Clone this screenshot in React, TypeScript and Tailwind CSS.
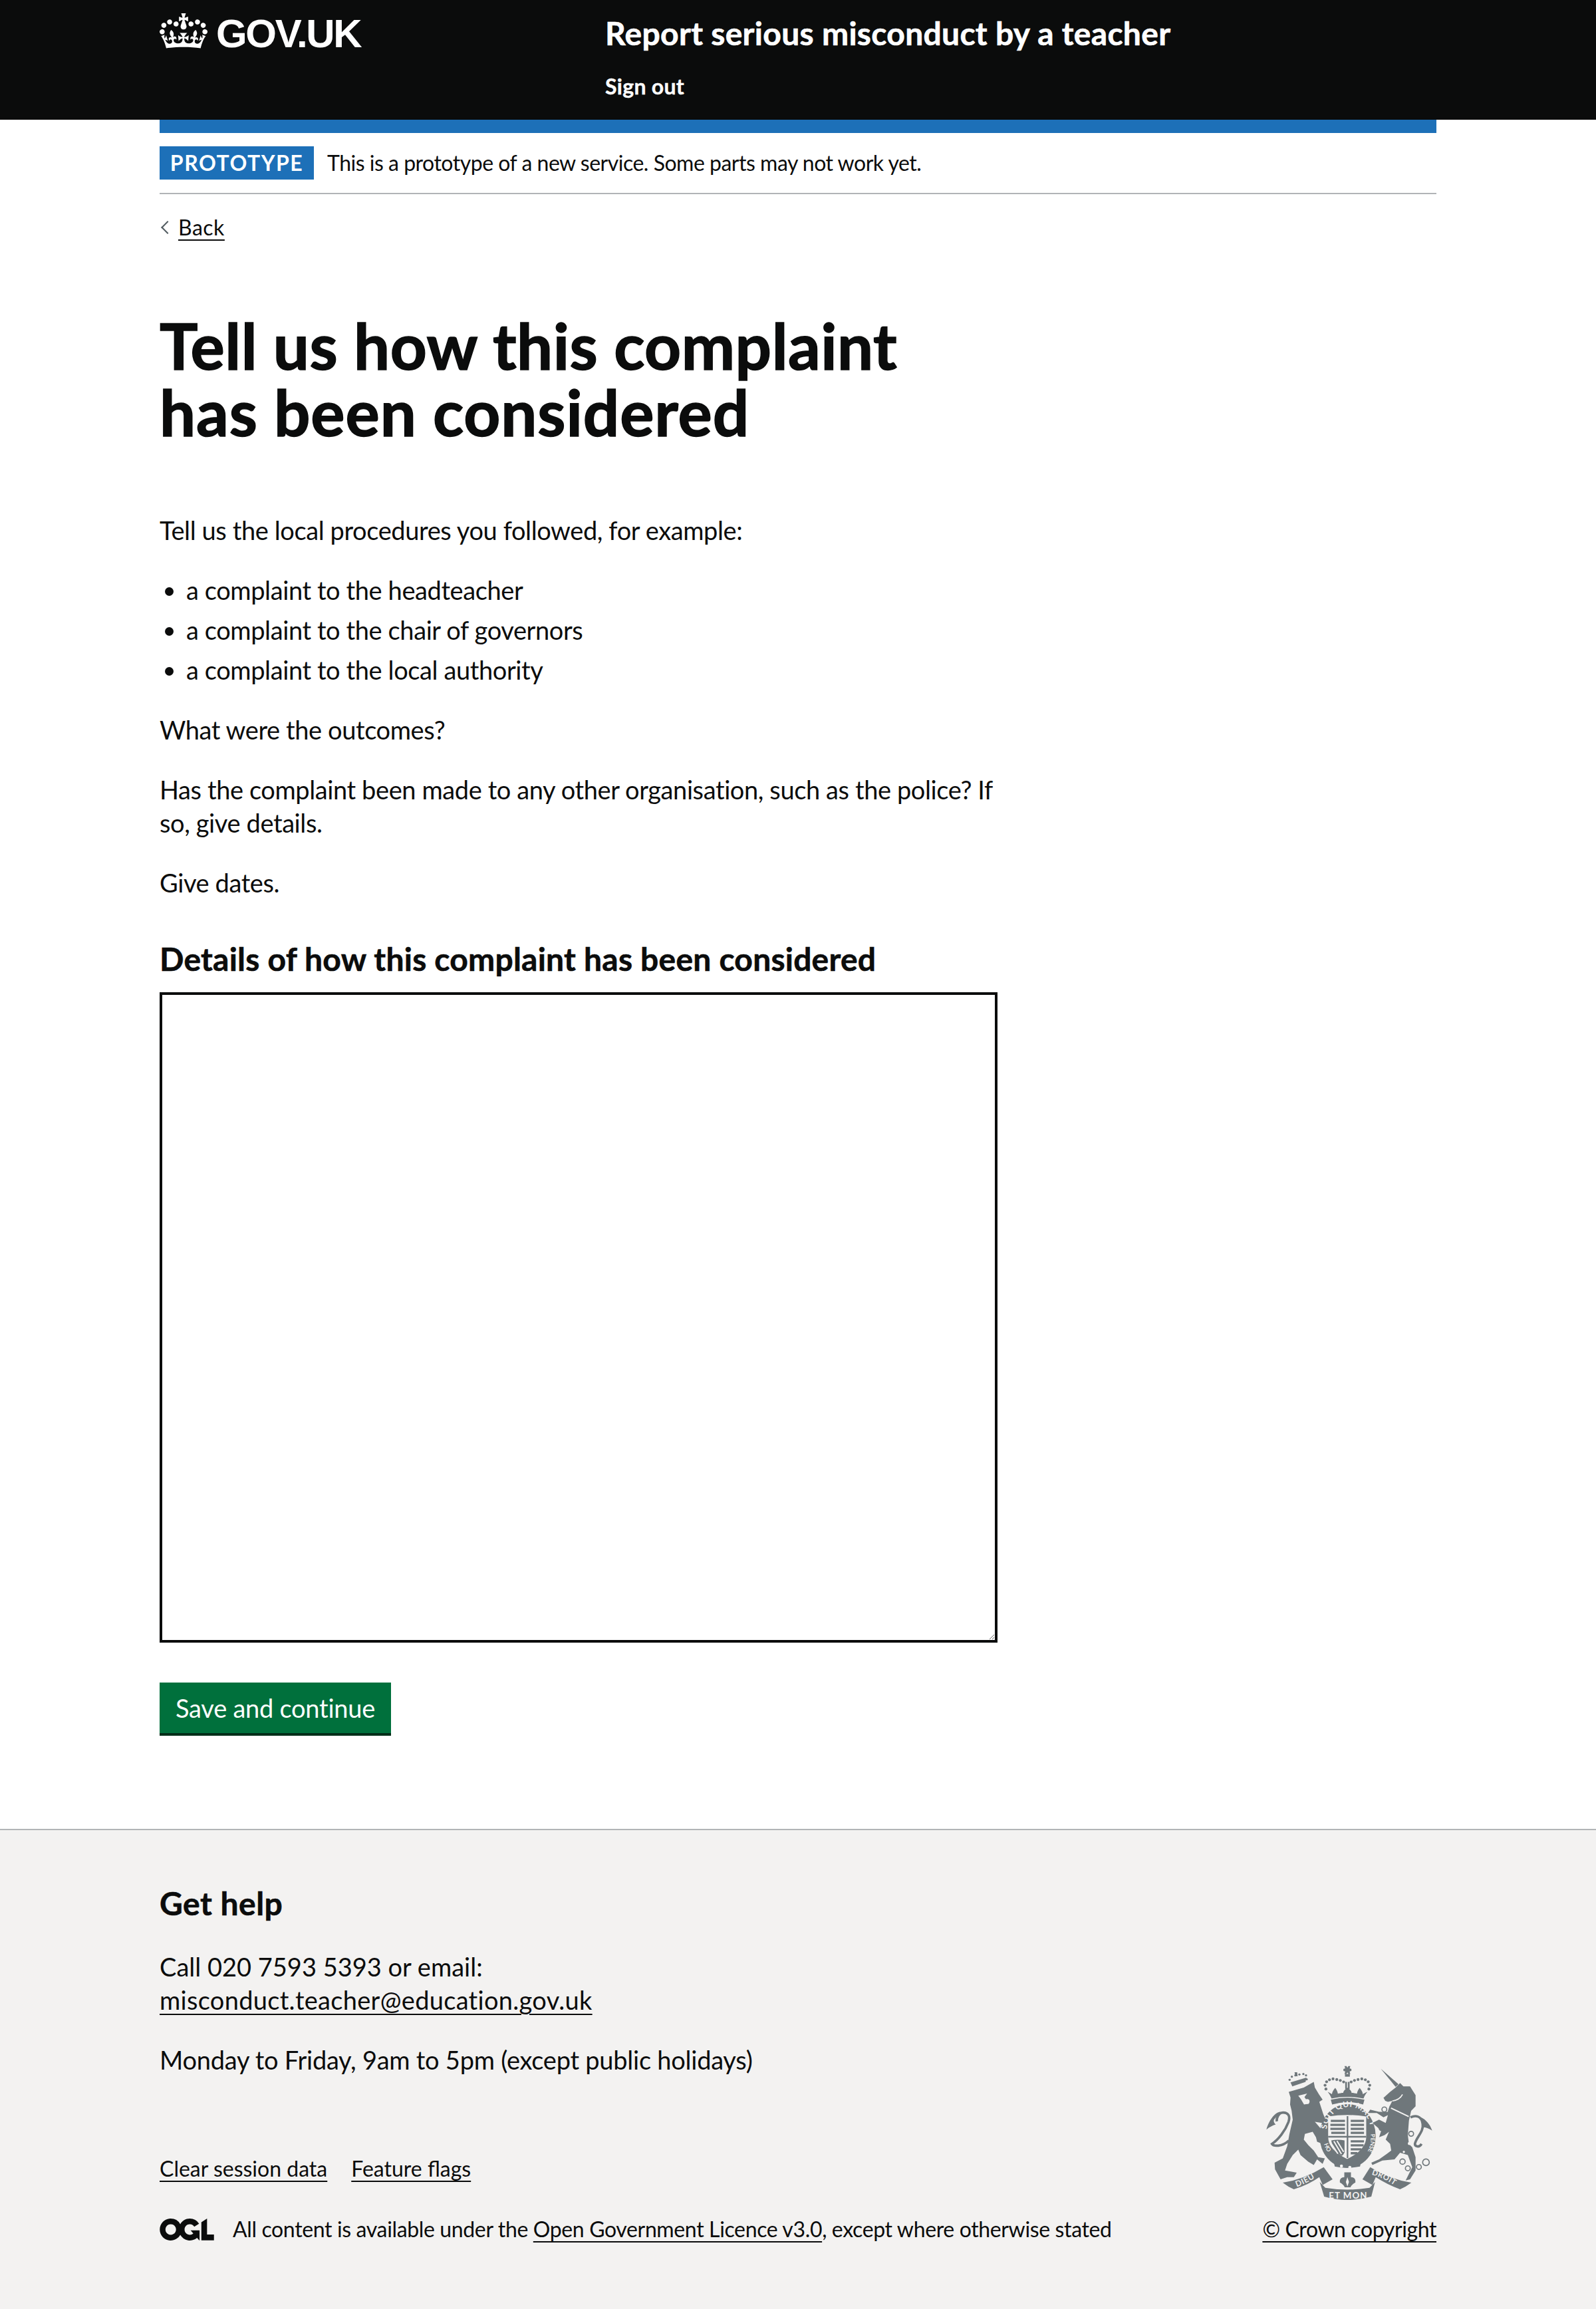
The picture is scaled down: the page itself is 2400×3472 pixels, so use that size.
import React from "react";

const body = "font-['Lato','Noto_Sans',sans-serif] text-[#0b0c0c]";

const Crown = () => (
  <svg viewBox="0 0 132 97" className="w-[72px] h-[53px] fill-white shrink-0">
    <path
      fillRule="evenodd"
      d="M25 30.2c3.5 1.5 7.7-.2 9.1-3.7 1.5-3.6-.2-7.8-3.9-9.2-3.6-1.4-7.6.3-9.1 3.9-1.4 3.5.3 7.5 3.9 9zM9 39.5c3.6 1.5 7.8-.2 9.2-3.7 1.5-3.6-.2-7.8-3.9-9.1-3.6-1.5-7.6.2-9.1 3.8-1.4 3.5.3 7.5 3.8 9zM4.4 57.2c3.5 1.5 7.7-.2 9.1-3.8 1.5-3.6-.2-7.7-3.9-9.1-3.5-1.5-7.6.3-9.1 3.8-1.4 3.5.3 7.6 3.9 9.1zm38.3-21.4c3.5 1.5 7.7-.2 9.1-3.8 1.5-3.6-.2-7.7-3.9-9.1-3.6-1.5-7.6.3-9.1 3.8-1.3 3.6.4 7.7 3.9 9.1zm64.4-5.6c-3.6 1.5-7.8-.2-9.1-3.7-1.5-3.6.2-7.8 3.8-9.2 3.6-1.4 7.7.3 9.2 3.9 1.3 3.5-.4 7.5-3.9 9zm15.9 9.3c-3.6 1.5-7.7-.2-9.1-3.7-1.5-3.6.2-7.8 3.7-9.1 3.6-1.5 7.7.2 9.2 3.8 1.5 3.5-.3 7.5-3.8 9zm4.7 17.7c-3.6 1.5-7.8-.2-9.2-3.8-1.5-3.6.2-7.7 3.9-9.1 3.6-1.5 7.7.3 9.2 3.8 1.3 3.5-.4 7.6-3.9 9.1zM89.3 35.8c-3.6 1.5-7.8-.2-9.2-3.8-1.4-3.6.2-7.7 3.9-9.1 3.6-1.5 7.7.3 9.2 3.8 1.4 3.6-.3 7.7-3.9 9.1zM69.7 17.7l8.9 4.7V9.3l-8.9 2.8c-.2-.3-.5-.6-.9-.9L72.4 0H59.6l3.6 11.2c-.3.3-.6.5-.9.9l-8.8-2.8v13.1l8.8-4.7c.3.3.6.7.9.9l-5 15.4v.1c-.2.8-.4 1.6-.4 2.4 0 4.1 3.1 7.5 7 8.1h.2c.3 0 .7.1 1 .1.4 0 .7 0 1-.1h.2c4-.6 7.1-4.1 7.1-8.1 0-.8-.1-1.7-.4-2.4V34l-5.1-15.4c.4-.2.7-.6 1-.9zM66 92.8c16.9 0 32.8 1.1 47.1 3.2 4-16.9 8.9-26.7 14-33.5l-9.6-3.4c1 4.9 1.1 7.2 0 10.2-1.5-1.4-3-4.3-4.2-8.7L108.6 76c2.8-2 5-3.2 7.5-3.3-4.4 9.4-10 11.9-13.6 11.2-4.3-.8-6.3-4.6-5.6-7.9 1-4.7 5.7-5.9 8-.5 4.3-8.7-3-11.4-7.6-8.8 7.1-7.2 7.9-13.5 2.1-21.1-8 6.1-8.1 12.3-4.5 20.8-4.7-5.4-12.1-2.5-9.5 6.2 3.4-5.2 7.9-2 7.2 3.1-.6 4.3-6.4 7.8-13.5 7.2-10.3-.9-10.9-8-11.2-13.8 2.5-.5 7.1 1.8 11 7.3L80.2 60c-4.1 4.4-8 5.3-12.3 5.4 1.4-4.4 8-11.6 8-11.6H55.5s6.4 7.2 7.9 11.6c-4.2-.1-8-1-12.3-5.4l1.4 16.4c3.9-5.5 8.5-7.7 10.9-7.3-.3 5.8-.9 12.8-11.1 13.8-7.2.6-12.9-2.9-13.5-7.2-.7-5 3.8-8.3 7.1-3.1 2.7-8.7-4.6-11.6-9.4-6.2 3.7-8.5 3.6-14.7-4.6-20.8-5.8 7.6-5 13.9 2.2 21.1-4.7-2.6-11.9.1-7.7 8.8 2.3-5.5 7.1-4.2 8.1.5.7 3.3-1.3 7.1-5.7 7.9-3.5.7-9-1.8-13.5-11.2 2.5.1 4.7 1.3 7.5 3.3l-4.7-15.4c-1.2 4.4-2.7 7.2-4.3 8.7-1.1-3-.9-5.3 0-10.2l-9.5 3.4c5 6.9 9.9 16.7 14 33.5 14.8-2.1 30.8-3.2 47.7-3.2z"
    />
  </svg>
);

const Ogl = () => (
  <svg viewBox="0 0 483.2 195.7" className="w-[82px] h-[33px] fill-[#0b0c0c] shrink-0">
    <path d="M421.5 142.8V.1l-50.7 32.3v161.1h112.4v-50.7zm-122.3-9.6A47.12 47.12 0 0 1 221 97.8c0-26 21.1-47.1 47.1-47.1 16.7 0 31.4 8.7 39.7 21.8l42.7-27.2A97.63 97.63 0 0 0 268.1 0c-36.5 0-68.3 20.1-85.1 49.7A98 98 0 0 0 97.8 0C43.9 0 0 43.9 0 97.8s43.9 97.8 97.8 97.8c36.5 0 68.4-20.1 85.1-49.7a97.76 97.76 0 0 0 149.6 25.4l19.4 22.2h3v-87.8h-80l24.3 27.5zM97.8 145c-26 0-47.1-21.1-47.1-47.1s21.1-47.1 47.1-47.1 47.2 21 47.2 47S123.8 145 97.8 145" />
  </svg>
);

const crestFont = { fontFamily: "Lato, sans-serif", fontWeight: 700, fill: "#f3f2f1" };

// royal arms, traced by hand from the reference
const Crest = () => (
  <svg viewBox="130 80 760 625" className="w-[253px] h-[208px] fill-[#6f777b]">
    {/* royal crown */}
    <path d="M484 88h9l4 8 4-8h9l-3 11 8 2v9l-8 2 3 12h-9l-4-8-4 8h-9l3-12-8-2v-9l8-2z" />
    <rect x="486" y="124" width="22" height="12" />
    {[[400,192],[396,175],[403,159],[416,150],[432,146],[449,149],[465,153],[480,160],[594,192],[598,175],[591,159],[578,150],[562,146],[545,149],[529,153],[514,160]].map(([x, y]) => (
      <circle key={x} cx={x} cy={y} r="6.5" />
    ))}
    <path d="M487 160h8v32h-8zM499 160h8v32h-8z" />
    <path d="M408 205c8 10 14 20 17 30 45-10 100-10 145 0 3-10 9-20 17-30-8 2-14 8-20 10-2-12-8-20-15-28-6 8-11 18-12 26-8-2-16-4-24-4 0-8-8-16-19-24-10 8-19 16-19 24-8 0-16 2-24 4-1-8-6-18-12-26-7 8-13 16-15 28-6-2-12-8-19-10z" />
    <path d="M422 240q75-18 152 0l-6 22q-70-22-140 0z" />

    {/* garter ring and shield */}
    <ellipse cx="498" cy="404" rx="127" ry="144" />
    <path d="M410 316q87-14 172 0v92q0 58-86 100q-86-42-86-100z" fill="#f3f2f1" />
    <path d="M494 314h7v190h-7zM410 404h172v7H410z" />
    <path d="M422 336h64M420 354h66M420 372h66M424 390h62M512 336h60M512 354h60M512 372h60M512 390h60M512 428h60M512 446h58M512 464h48M512 482h30" stroke="#6f777b" strokeWidth="10" fill="none" />
    <path d="M424 424q30-6 60 0v54q-6 14-14 16-40-22-46-70z" />
    <path d="M436 428l34 58M450 426l30 50M424 438l30 46" stroke="#f3f2f1" strokeWidth="6" fill="none" />
    <path id="ringTop" d="M404 380A96 104 0 0 1 602 380" fill="none" />
    <text {...crestFont} fontSize="36" letterSpacing="2">
      <textPath href="#ringTop" startOffset="2%">SOIT QUI MAL Y</textPath>
    </text>
    <path id="ringRight" d="M600 385A108 120 0 0 1 560 510" fill="none" />
    <text {...crestFont} fontSize="26">
      <textPath href="#ringRight" startOffset="8%">PENSE</textPath>
    </text>
    <path id="ringLeft" d="M392 440A108 110 0 0 0 430 500" fill="none" />
    <text {...crestFont} fontSize="26">
      <textPath href="#ringLeft">HO</textPath>
    </text>
    <path d="M432 506q65 30 130 0l-8 36q-60 12-114 0z" />
    <circle cx="470" cy="540" r="7" fill="#f3f2f1" />
    <circle cx="508" cy="546" r="7" fill="#f3f2f1" />

    {/* lion */}
    <path d="M232 205L300 185L345 160L350 185L368 215L385 240L370 250L388 305L400 335L382 345L350 340L402 400L405 430L385 440L360 430L355 410L340 385L305 395L300 420L320 445L345 470L365 500L395 505L385 530L360 510L345 535L320 520L285 490L275 465L250 490L225 530L215 560L245 565L268 570L255 590L225 590L195 600L170 555L168 525L205 505L225 450L235 395L250 330L245 290L238 262L240 230z" />
    <path d="M232 425c-30 30-70 25-76 15 30-20 60-60 75-100 8-25 0-42-25-42-22 0-30 30-28 40" fill="none" stroke="#6f777b" strokeWidth="11" />
    <path d="M195 295c-20 0-50 30-64 80 15-12 32-20 42-22-8-8-10-16-8-22z" />
    <path d="M275 222l40-10-12 16 20 30-22 4-14-24z" fill="#f3f2f1" />
    <circle cx="315" cy="248" r="11" fill="#f3f2f1" />
    {[[236,150],[246,136],[262,130],[280,126],[298,124],[310,130],[313,148]].map(([x, y]) => (
      <circle key={x} cx={x} cy={y} r="5" />
    ))}
    <path d="M240 162l72-22-4 20-60 20zM258 116h12l2 18h-10z" />

    {/* unicorn */}
    <path d="M648 100L728 170L715 182z" />
    <path d="M660 232L690 205L715 185L735 165L750 180L780 180L805 220L805 270L785 290L775 335L770 400L775 440L790 455L805 500L805 560L780 600L760 605L775 575L790 545L770 490L735 480L710 510L655 515L610 535L605 525L640 510L675 485L695 470L690 440L670 420L685 385L665 400L640 410L650 380L610 345L640 330L670 345L680 310L660 320L630 300L590 300L600 285L640 295L680 295L690 265L700 245L680 250L668 245z" />
    <path d="M688 268l90 44-6 22-92-42z" />
    <path d="M694 278l80 38" stroke="#f3f2f1" strokeWidth="6" fill="none" />
    <path d="M700 246q34-6 46-30" stroke="#f3f2f1" strokeWidth="5" fill="none" />
    <path d="M782 320c20-10 50-10 55 30 6 35-30 60-35 90 0 10 18 20 30 0" fill="none" stroke="#6f777b" strokeWidth="11" />
    <path d="M830 320c20 10 40 30 50 60-15-10-30-15-40-15z" />
    {[[664,284,11],[652,368,12],[785,394,11],[746,520,12],[770,550,11],[820,544,11],[852,523,15]].map(([x, y, r]) => (
      <circle key={x} cx={x} cy={y} r={r} fill="none" stroke="#6f777b" strokeWidth="5" />
    ))}
    <circle cx="777" cy="438" r="7" fill="#f3f2f1" />
    <circle cx="752" cy="476" r="5" fill="#f3f2f1" />

    {/* motto scroll */}
    <path d="M205 615Q300 600 390 545L430 600L385 625L370 590Q320 625 255 645Q230 635 205 615z" />
    <path id="scrollLeft" d="M268 634Q320 615 372 580" fill="none" />
    <text {...crestFont} fontSize="36" letterSpacing="2">
      <textPath href="#scrollLeft">DIEU</textPath>
    </text>
    <path d="M786 615Q690 600 600 545L565 600L610 625L625 590Q680 625 735 645Q760 635 786 615z" />
    <path id="scrollRight" d="M606 578Q670 596 726 640" fill="none" />
    <text {...crestFont} fontSize="34" letterSpacing="2">
      <textPath href="#scrollRight">DROIT</textPath>
    </text>
    <path d="M372 612L397 638Q497 655 597 638L622 612L605 678Q497 708 392 678z" />
    <text {...crestFont} x="413" y="687" fontSize="40" textLength="172">ET MON</text>
    <path d="M483 568h30v22q22 0 20 24-16 8-22 22h-26q-6-14-22-22-2-24 20-24z" />
    <path d="M497 590l7 22-7 20-7-20z" fill="#f3f2f1" />
  </svg>
);

const A = ({ children, className = "" }: { children: React.ReactNode; className?: string }) => (
  <a href="#" className={`underline decoration-2 underline-offset-[6px] ${className}`}>
    {children}
  </a>
);

export default function App() {
  return (
    <div className={`${body} min-h-[3472px] flex flex-col bg-white`}>
      <header className="bg-[#0b0c0c] h-[180px] text-white">
        <div className="w-[1920px] mx-auto flex">
          <div className="w-[670px] pt-[20px] flex items-start gap-[13px]">
            <Crown />
            <span className="font-['Liberation_Sans',sans-serif] font-bold text-[60px] leading-[62px] tracking-[-2.3px]">GOV.UK</span>
          </div>
          <div className="pt-[20px] font-bold">
            <div className="text-[48px] leading-[60px] tracking-[0.3px] [-webkit-text-stroke:0.6px_#ffffff]">Report serious misconduct by a teacher</div>
            <div className="text-[32px] leading-[40px] mt-[30px] tracking-[0.3px] [-webkit-text-stroke:0.4px_#ffffff]">Sign out</div>
          </div>
        </div>
      </header>

      <main className="w-[1920px] mx-auto flex-1">
        <div className="border-t-[20px] border-[#1d70b8] border-b-2 border-b-[#b1b4b6] py-[20px] flex items-center gap-[20px] h-[112px]">
          <strong className="bg-[#1d70b8] text-white font-bold text-[32px] leading-[50px] w-[232px] text-center tracking-[1.5px]">PROTOTYPE</strong>
          <span className="text-[32px] leading-[40px] tracking-[-0.49px]">This is a prototype of a new service. Some parts may not work yet.</span>
        </div>

        <div className="mt-[30px] flex items-center h-[40px]">
          <span className="w-[14px] h-[14px] ml-[5px] mr-[9px] border-l-2 border-b-2 border-[#505a5f] rotate-45" />
          <A className="text-[32px] leading-[40px] tracking-[0.5px]">Back</A>
        </div>

        <div className="w-[1260px] mt-[110px]">
          <h1 className="font-bold text-[96px] leading-[100px] mb-[100px] tracking-[0.5px] relative top-[-3px] [-webkit-text-stroke:1.5px_#0b0c0c]">
            Tell us how this complaint
            <br />
            <span className="tracking-[0.9px]">has been considered</span>
          </h1>
          <div className="text-[38px] leading-[50px] tracking-[-0.4px]">
            <p className="mb-[40px]">Tell us the local procedures you followed, for example:</p>
            <ul className="list-disc pl-[40px] mb-[40px]">
              <li className="mb-[10px]">a complaint to the headteacher</li>
              <li className="mb-[10px]">a complaint to the chair of governors</li>
              <li>a complaint to the local authority</li>
            </ul>
            <p className="mb-[40px]">What were the outcomes?</p>
            <p className="mb-[40px]">Has the complaint been made to any other organisation, such as the police? If so, give details.</p>
            <p className="mb-[60px]">Give dates.</p>
          </div>
          <label className="block font-bold text-[48px] leading-[60px] mb-[20px] tracking-[0.22px] [-webkit-text-stroke:0.6px_#0b0c0c]">Details of how this complaint has been considered</label>
          <textarea className="block w-full h-[978px] border-4 border-[#0b0c0c] p-[10px] text-[38px] mb-[60px]" />
          <button className="block bg-[#00703c] text-white text-[38px] leading-[50px] w-[348px] h-[80px] border-b-4 border-[#002d18] tracking-[-0.25px]">Save and continue</button>
        </div>
      </main>

      <footer className="mt-[140px] bg-[#f3f2f1] border-t-2 border-[#b1b4b6] h-[722px] pt-[80px]">
        <div className="w-[1920px] mx-auto flex justify-between items-start">
          <div>
            <h2 className="font-bold text-[48px] leading-[60px] mb-[40px] tracking-[0.5px] [-webkit-text-stroke:0.6px_#0b0c0c]">Get help</h2>
            <div className="text-[38px] leading-[50px]">
              <p className="mb-[40px]">
                Call 020 7593 5393 or email:
                <br />
                <A className="tracking-[0.3px]">misconduct.teacher@education.gov.uk</A>
              </p>
              <p className="tracking-[-0.25px]">Monday to Friday, 9am to 5pm (except public holidays)</p>
            </div>
            <ul className="flex gap-[36px] text-[32px] leading-[40px] mt-[119px]">
              <li><A>Clear session data</A></li>
              <li><A>Feature flags</A></li>
            </ul>
            <div className="flex items-center gap-[28px] text-[32px] leading-[40px] mt-[51px] tracking-[-0.36px]">
              <Ogl />
              <span>
                All content is available under the <A>Open Government Licence v3.0</A>, except where otherwise stated
              </span>
            </div>
          </div>
          <div className="flex flex-col items-end pt-[272px]">
            <div className="mr-[3px]">
              <Crest />
            </div>
            <A className="text-[32px] leading-[40px] mt-[20px] tracking-[-0.4px]">© Crown copyright</A>
          </div>
        </div>
      </footer>
    </div>
  );
}
